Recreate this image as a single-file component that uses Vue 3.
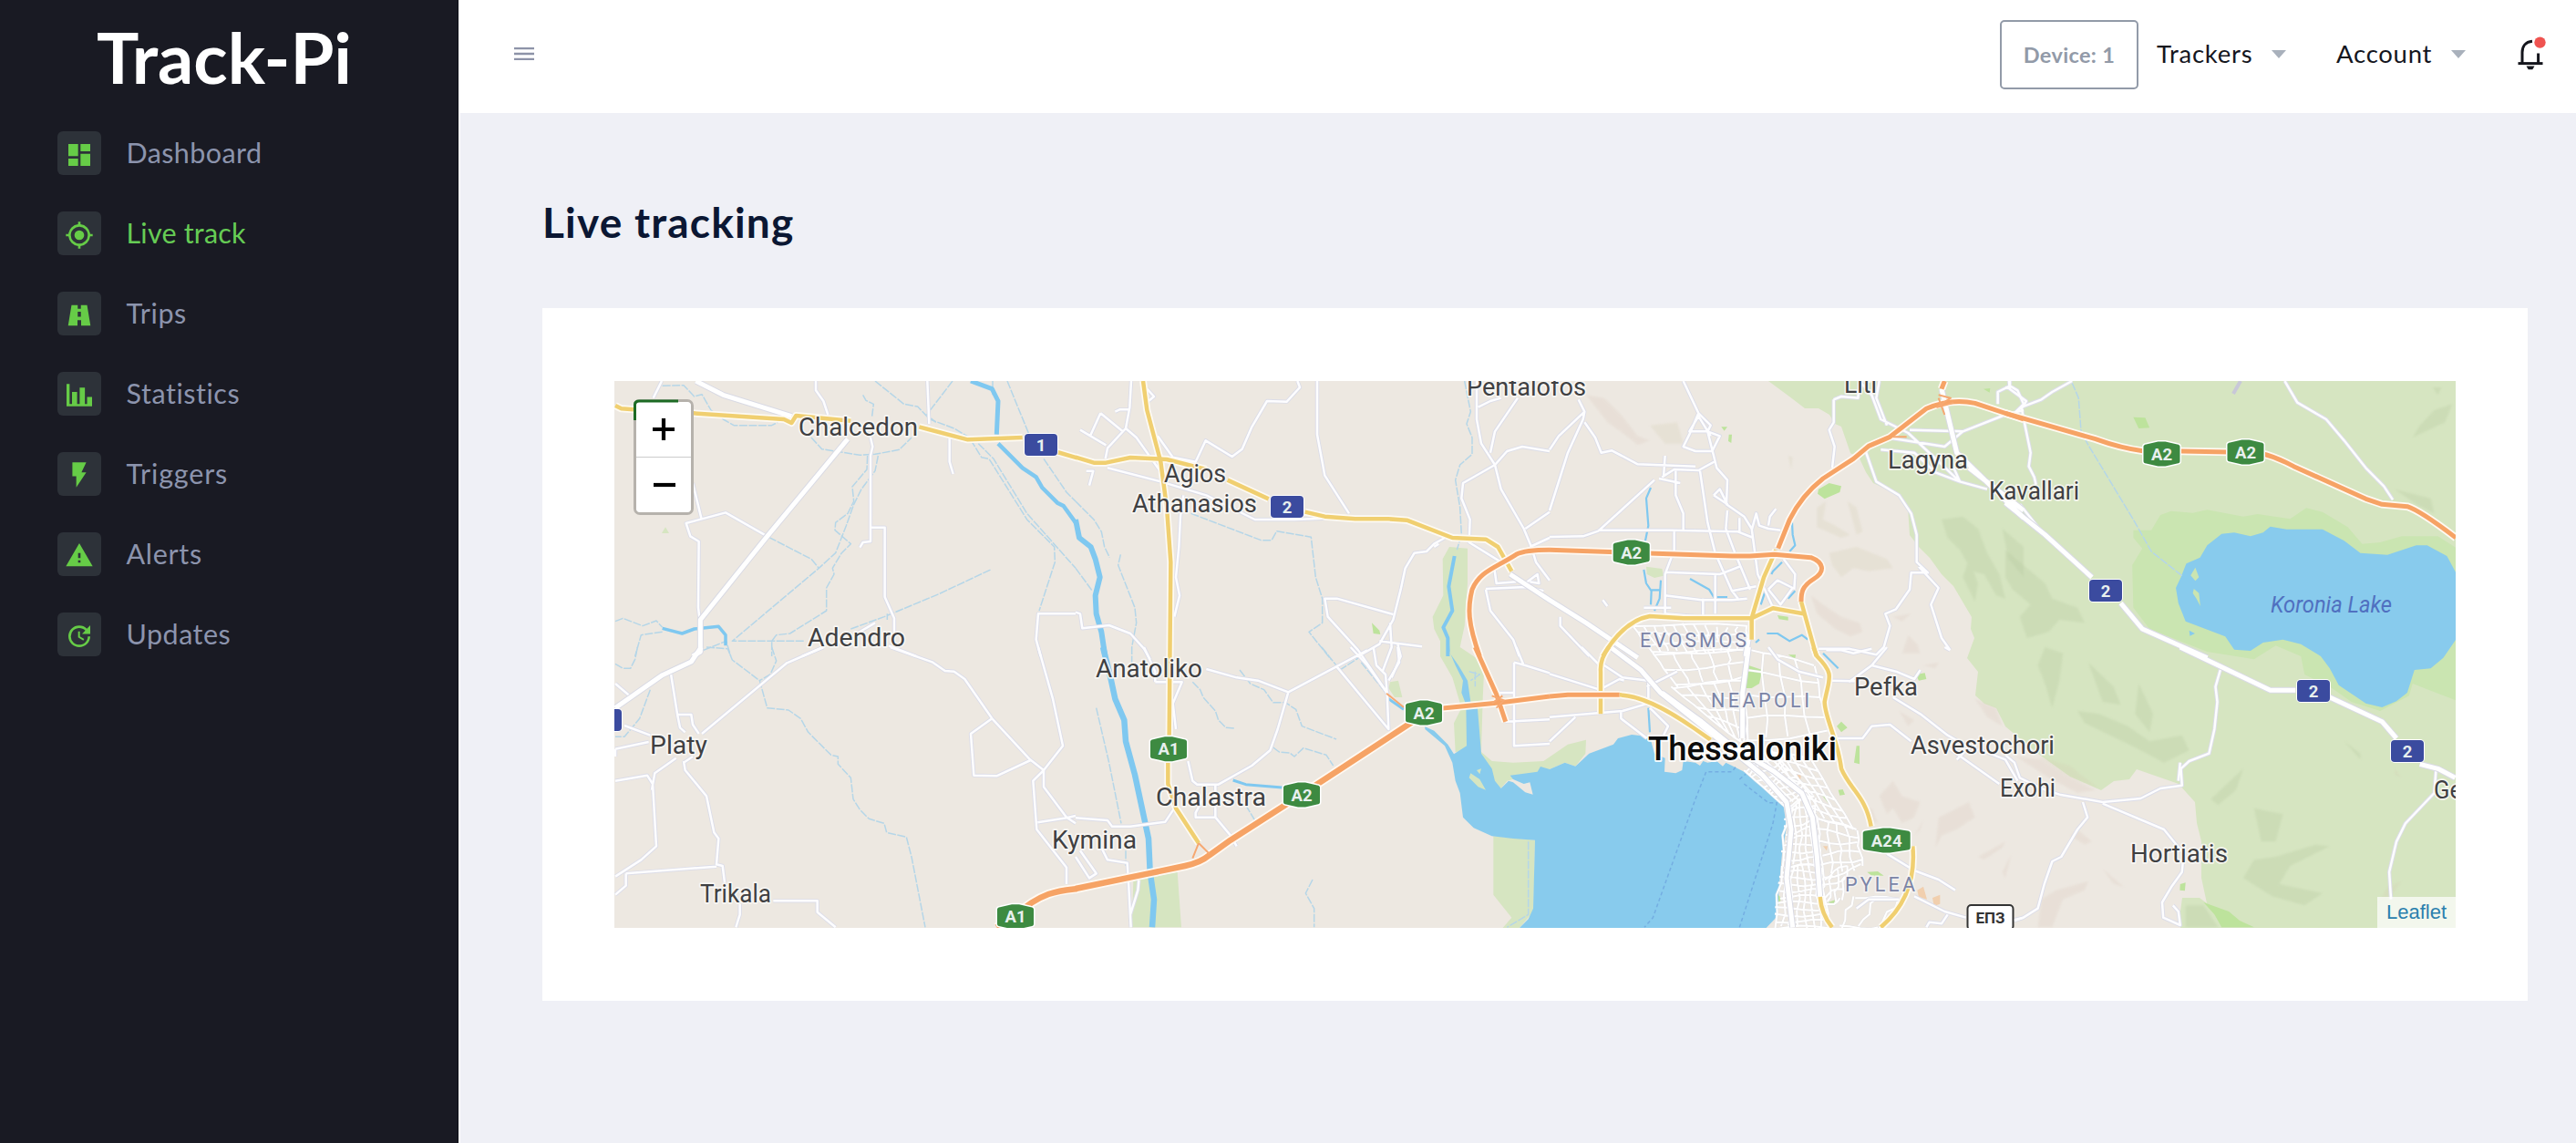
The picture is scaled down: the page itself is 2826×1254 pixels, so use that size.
<script setup>
const menu = [
  { label: 'Dashboard', icon: 'M3 13h8V3H3v10zm0 8h8v-6H3v6zm10 0h8V11h-8v10zm0-18v6h8V3h-8z', gap: 0.4 },
  { label: 'Live track', icon: 'M12 8a4 4 0 1 0 0 8 4 4 0 0 0 0-8zm8.94 3A8.99 8.99 0 0 0 13 3.06V1h-2v2.06A8.99 8.99 0 0 0 3.06 11H1v2h2.06A8.99 8.99 0 0 0 11 20.94V23h2v-2.06A8.99 8.99 0 0 0 20.94 13H23v-2h-2.06zM12 19a7 7 0 1 1 0-14 7 7 0 0 1 0 14z', active: true, gap: 0.2 },
  { label: 'Trips', icon: 'M5.6 3.5H10.7V6.5H13.3V3.5H18.4L21.2 20.5H13.5V16H10.5V20.5H2.8zM10.7 9V13.2H13.3V9z', gap: 0.6 },
  { label: 'Statistics', icon: 'M1.5 2.5H4V19H6V9H10.2V19H12.3V5.5H16.6V19H18.4V13.2H22.5V20.8H1.5z', gap: 0.55 },
  { label: 'Triggers', icon: 'M6.3 1v11.4h3.2V21.5L17.7 9.2h-3.9L17.7 1z', gap: 0.85 },
  { label: 'Alerts', icon: 'M1 20.5h22L12 1.5 1 20.5zM13 17.5h-2v-2h2v2zm0-3.8h-2V9.5h2v4.2z', gap: 0.7 },
  { label: 'Updates', icon: 'M21 10.12h-6.78l2.74-2.82c-2.73-2.7-7.15-2.8-9.88-.1a6.887 6.887 0 0 0 0 9.8c2.73 2.7 7.15 2.7 9.88 0 1.36-1.35 2.04-2.92 2.04-4.9h2c0 1.98-.88 4.55-2.64 6.29-3.51 3.48-9.21 3.48-12.72 0-3.5-3.47-3.53-9.11-.02-12.58a8.987 8.987 0 0 1 12.65 0L21 3v7.12zM12.5 8v4.25l3.5 2.08-.72 1.21L11 13V8h1.5z', gap: 0.5 },
]

// map sheets: origin and scale of each survey square
const sx = 0.3954
const sheets = {
  A: `translate(660 400) scale(${1 / 3})`,
  B: `translate(1180 400) scale(${1 / 3})`,
  C: `translate(1700 400) scale(${1 / 3})`,
  D: `translate(2200 400) scale(${sx} ${1 / 3})`,
  E: `translate(660 710) scale(${1 / 3})`,
  F: `translate(1180 710) scale(${1 / 3})`,
  G: `translate(1700 710) scale(${1 / 3})`,
  H: `translate(2200 710) scale(${sx} ${1 / 3})`,
}

const areas = [
  ['D', 'wet', 'M355 545L405 545L430 495L460 482L520 488L560 478L660 500L700 492L790 508L835 472L880 485L950 535L990 590L1040 585L1100 565L1200 565L1260 610V1110L1130 1050L1120 1090L1040 1140L960 1110L900 1060L830 1020L820 960L750 925L690 970L560 945L400 870L355 800L352 660L380 605L355 570Z'],
  ['D', 'water', 'M735 533L780 542L880 542L940 580L985 620L1060 626L1140 595L1170 595L1225 630L1250 685L1250 905L1215 965L1180 1000L1135 1005L1115 1080L1085 1108L1045 1128L1000 1115L925 1055L900 1000L875 960L820 920L770 905L715 915L680 942L635 938L610 895L500 845L480 785L473 735L487 700L502 655L540 635L560 595L600 557L635 553L680 565L715 553Z'],
  ['D', 'wet', 'M527 668L537 700L527 712L514 694ZM523 738L537 752L541 795L530 770L520 752Z'],
  ['D', 'water', 'M510 875L526 885L512 893Z'],
  ['F', 'green', 'M1230 -330L1290 -325L1290 -210L1280 -70L1265 0L1310 30L1345 60L1340 170L1335 345L1370 375L1440 380L1540 375L1620 320L1680 305L1678 350L1645 392L1610 380L1560 402L1420 440L1395 470L1300 340L1250 345L1245 250L1270 200L1240 100L1200 30L1200 -20L1180 -60L1175 -100L1210 -170L1208 -290Z'],
  ['F', 'green', 'M1035 115L1062 110L1075 165L1050 165L1030 135ZM190 770L335 740L348 922H185Z'],
  ['F', 'green', 'M1375 622L1512 635L1507 870L1460 925H1405L1435 890L1375 815Z'],
  ['F', 'water', 'M1220 -10L1250 60L1275 110L1270 150L1285 190L1287 325L1245 352L1225 320L1180 275L1150 262L1150 270L1215 325L1240 380L1250 440L1265 480L1275 560L1310 595L1370 622L1440 630L1512 635L1506 860L1490 895L1460 925H2272L2310 885L2315 790L2325 680L2340 590L2330 525L2260 460L2200 410L2160 390L2140 380L2130 392L2110 375L2080 380L2065 375L2055 390L2040 380L2000 375L1996 405L1975 415L1938 410L1940 365L1905 350L1890 295L1830 288L1785 300L1770 320L1690 350L1645 392L1610 380L1560 402L1530 393L1520 410L1430 422L1440 435L1475 450L1495 445L1505 485L1480 478L1440 445L1425 440L1400 465L1380 440L1370 400L1335 350L1322 190L1300 180L1290 110L1260 60L1232 20L1230 -10Z'],
  ['F', 'green', 'M1300 415L1330 435L1350 470L1325 460L1295 430ZM1320 405L1335 400L1330 418Z'],
  ['G', 'park', 'M655 60L700 75L690 120L665 135L640 135ZM945 260L960 245L980 265L960 280ZM1010 325L1020 325L1020 385L1002 380ZM1205 90L1235 85L1240 105L1215 110ZM950 470L965 468L972 485L955 488ZM895 485L910 490L918 515ZM1045 740L1080 738L1100 752L1060 752ZM785 25L810 25L808 38ZM915 840L940 832L935 845ZM230 110L245 102L240 115ZM752 815L762 825L755 850Z'],
  ['C', 'park', 'M885 410L920 390L960 400L955 420L905 442L882 425ZM750 825L785 830L785 842L755 838ZM590 230L600 230L598 258L588 252ZM1428 80L1450 78L1448 92ZM565 205L585 205L575 218Z'],
  ['C', 'green', 'M318 665L370 672L375 695L345 702L320 690Z'],
  ['B', 'park', 'M975 850L1000 875L1003 888L980 885Z'],
  ['A', 'green', 'M198 555L210 535L222 555Z'],
  ['D', 'park', 'M355 173L388 175L400 208L370 210Z'],
  ['H', 'park', 'M550 840L620 870L650 900L690 922H600L580 880ZM485 780L500 775L498 802L484 800Z'],
  ['G', 'sand', 'M1210 800L1230 788L1242 830L1215 822ZM1260 825L1285 815L1285 845L1265 852ZM812 422L828 418L825 438ZM900 655L915 655L912 670Z'],
]

// relief shading
const relief = [
  ['C', 'brown', 'M120 100L180 110L240 170L290 235L330 250L290 265L240 225L190 190ZM860 760L900 790L960 830L1020 850L1030 880L990 895L940 870L880 820ZM1130 830L1190 820L1160 845ZM1180 890L1210 920L1220 950L1160 950Z'],
  ['C', 'olive', 'M880 470L910 450L900 510L940 530L990 560L960 570L880 535ZM920 620L1010 600L1110 640L1130 670L1050 680L1000 670L960 700L930 660ZM980 450L1010 560L1030 550L1010 470ZM785 300L800 305L795 345ZM330 200L420 190L440 260L380 260Z'],
  ['C', 'dark', 'M1290 510L1360 500L1410 540L1440 620L1480 690L1500 770L1470 760L1430 690L1390 680L1350 610L1310 570ZM1380 640L1410 720L1400 780L1360 700ZM1490 540L1560 600V700L1510 640Z'],
  ['D', 'dark', 'M0 610L50 660L110 720L130 770L200 800L220 850L150 840L120 880L60 900L40 830L70 790L20 740L0 700ZM1190 150L1240 130L1220 190L1130 240L1150 200ZM1080 410L1180 440L1190 490L1140 460ZM1185 75L1210 75L1200 100Z'],
  ['H', 'dark', 'M110 0L160 20L150 110L130 200L110 120L90 60ZM230 50L300 130L320 190L270 180ZM370 120L410 220L400 280L360 220ZM200 210L260 220L340 260L400 310L490 290L510 340L440 380L360 330L220 250ZM660 400L640 470L590 520L570 500ZM690 530L770 550L750 640L710 640ZM690 700L750 690L860 650L900 655L790 720L760 780L880 810L830 850L740 820L660 760ZM940 310L985 350L985 370ZM500 850L550 850L590 922H500Z'],
  ['H', 'olive', 'M90 360L180 390L210 420L260 465L180 430ZM1080 400L1100 430L1080 420ZM1100 770L1070 820L1030 850L1060 790Z'],
  ['H', 'brown', 'M30 360L100 370L180 430L250 470L200 480L120 430ZM100 830L140 800L230 770L220 800L160 830L130 922H90ZM200 600L240 640L220 650L180 620ZM270 730L330 790L300 780Z'],
  ['G', 'brown', 'M1085 490L1130 440L1160 490L1220 510L1200 560L1160 580L1130 530L1110 550ZM1280 560L1340 530L1380 510L1400 560L1340 600L1290 620L1270 660ZM1220 600L1230 570L1200 620ZM1410 690L1500 640L1490 660L1430 700ZM1030 540L1060 530L1080 580L1050 570ZM1150 210L1200 240L1180 260ZM1400 170L1470 200L1490 260L1440 230ZM1230 60L1280 50L1270 70ZM1490 740L1520 680L1500 760Z'],
]

const streams = [
  ['A', 'M200 70L270 68L305 105L330 98L360 150L400 180L435 200H560L580 190'],
  ['A', 'M900 54L995 130L1040 138L1080 180L1160 210L1210 240L1250 305L1275 310L1400 510L1490 600L1492 650L1440 810'],
  ['A', 'M1240 260L1290 310L1400 490L1560 670M1155 54L1070 165L1100 190M1335 54L1370 140L1405 225M1287 54V100M1455 310L1530 420L1560 450'],
  ['A', 'M860 100L870 118L895 130L890 170M690 240L725 278L850 298L900 295L980 280L1020 240M875 300L873 345L825 402L830 450L810 490L770 520L768 545L820 590L790 620L760 670L765 690L740 735V810L620 885L575 890L560 910V960'],
  ['A', 'M910 300L900 350L855 410L830 460L805 530L770 620L715 670L430 910H670M550 568L690 640L715 670M820 870L930 830L1110 755L1280 675M940 820V840'],
  ['A', 'M45 845L70 835L135 860L180 843L200 865M200 880L130 890L110 960M335 940L410 910L425 960'],
  ['E', 'M45 55L70 70H95L110 40L118 0M345 0L415 5L430 42L520 110L545 200L615 207L655 235L680 280L755 355L778 360V385L820 430L828 500L850 535L880 565L930 580L938 610L1003 625L1020 690L1065 922M560 0L575 45L555 90L520 110M160 140L125 235L75 295H45'],
  ['B', 'M0 450L60 510L85 550L95 600L112 635M0 670L55 745M148 625L140 660L195 800L200 850L185 930V990M380 490L610 578H645L662 548L775 568L790 700L812 770V850L768 880L840 970'],
  ['B', 'M1280 54L1300 155L1287 195L1305 240V295L1265 330L1250 380L1265 470L1270 560L1255 610M1315 1010V1060'],
  ['F', 'M68 200L110 380L150 580M385 115L410 140L420 165L460 210L470 240L495 265L523 267M540 75L575 120L620 140L650 182H690L725 205L745 260L858 303M650 330L670 345L705 348L720 360L750 332L825 355L848 390M780 765L757 810L785 860V922M560 520L590 570M165 670V720M810 0L870 75L940 30M940 50L1020 150M1295 80L1330 90L1300 110M1490 640V880L1420 922'],
  ['D', 'M185 60L203 110L210 220L230 265L355 510L405 615L490 695'],
]

const rivers = [
  ['A', 'M1215 54L1285 80L1305 120L1300 230', 5],
  ['A', 'M1305 260L1385 340L1430 370L1450 405L1500 455L1520 465L1560 520', 4.5],
  ['B', 'M0 510L12 570L50 600L65 640L80 700L65 760L68 820L85 880L97 960', 6],
  ['F', 'M90 0L115 100L130 170L160 240L165 310L195 420L225 560L240 630L245 740L258 830L252 922', 6.5],
  ['A', 'M200 868L265 885L305 870L385 862L408 890V925', 3.5],
  ['B', 'M1247 630L1228 730L1240 810L1210 865L1225 900V960', 4],
  ['C', 'M333 405L318 440L325 530L315 580M310 675L318 720L335 745L333 790M366 710L362 770L345 810M335 742H362M462 705L525 740L540 765H585M798 520L800 560L808 595L790 615M765 650L735 680L730 690M710 745L695 790M808 745L785 770M715 885H750L790 910L830 890L850 905M690 905L678 915', 2.2],
  ['F', 'M518 438L560 452L680 462M1030 170L1080 205', 3],
  ['G', 'M325 200L330 280M900 20L950 70', 2.2],
]

const minor = [
  ['A', 'M198 54L170 110M705 54V85L730 120L745 165M1072 54L1078 195M1145 240V320L1157 360M885 240L892 270L885 300V582L860 585L850 602M888 536H932V765L963 835V880M300 390L328 505M545 565L408 487L278 522L292 565L320 582L318 800L323 840M1560 820H1437L1430 905L1445 960M660 960L730 930M945 925L1035 960M840 885L900 850'],
  ['E', 'M45 120L98 165M228 88L250 225M252 222H295L300 255L320 285M250 225L258 265L275 280M45 335L155 312M75 258L160 290M45 440L150 422L168 450L180 655L130 700L45 755M245 365L175 415L165 470M270 375L275 405L345 490L370 610L385 630L378 715L398 720L405 775M80 745L378 722M80 745V785L45 815M565 835H710V872L770 922M455 845V880L442 922M330 285L610 52L730 0M950 0L1090 50L1130 78L1160 80L1195 105L1285 235L1410 370L1455 405M1285 235L1215 285L1225 422L1300 424L1412 372M1437 0L1485 170L1518 325L1455 405V460L1530 560L1560 580M1455 405L1420 440L1432 600L1530 725V780M1435 577L1530 562L1560 555M45 335V360M300 360L270 380'],
  ['B', 'M183 54L178 140L165 210L105 275L98 310M130 155L145 148H178M15 215L100 265M82 160L155 220M82 160L48 235M165 210L200 240L285 360M270 235L320 305L395 320L428 250L515 303L548 278L580 205L630 120L695 122L738 75L730 54M235 80L258 105L240 120M795 54V230L820 365L900 490M105 340L280 385L430 430L590 510H720L850 505M35 350H58L45 398M355 430L345 500L340 600L330 700L342 760L325 830M1320 54V180L1335 260L1380 330L1400 410L1475 540L1500 600L1515 650L1560 710M1455 110L1380 220L1365 290M1325 140L1365 120L1400 110M1560 285L1470 270L1420 285L1380 330L1275 390L1270 440L1298 510L1295 585L1400 650M1480 540L1560 485M1495 600L1560 570M1215 570L1180 590L1155 615L1115 620L1085 670L1070 740L1045 840L1000 920L930 960M1195 590L1180 600M1045 822L860 770H820L830 830L930 940L1025 1080M1035 850L1040 930L1010 1010M1000 910L1140 928M1060 920L1070 960L1040 1030M0 815L15 820L22 868L110 858L180 885L225 935L245 970M1350 738L1480 732L1540 745M1350 740L1365 810L1440 905L1460 960M1378 670L1385 720L1450 715M1480 720L1520 690L1525 720L1495 715'],
  ['F', 'M430 72L530 100L600 110L700 148L960 10M700 148L665 270L640 340L580 390L470 452H400L385 440L370 375M262 115H350L320 185L330 270M905 0L960 60L1025 150L1030 270L860 65M980 0L990 60L1020 90L1025 150M1060 0L1065 50L1030 110M460 450V560H395L395 545L430 480M460 560L510 620L530 655M325 530L295 575L180 590H120L105 570L0 562M0 690L45 760L68 745L15 670M85 660L105 700L170 710L175 790L182 922M208 768L205 800L180 880M1390 150H1443M1443 50V325L1560 318M1443 50L1480 60L1560 85M1415 245L1560 238M1450 0L1475 60M225 0L262 80V115'],
  ['C', 'M95 115L115 155L110 180L60 290L0 480M115 155L30 235L0 280M115 190L150 240L170 290L205 283L290 328L480 335M440 54L490 160L530 200L520 220L550 340L585 380L582 460L640 500L665 540L685 690L740 810M490 160L460 230L440 270L480 285H535L560 235L520 220H460L490 170L530 235M345 380L160 548L110 565L0 567M370 370L410 345L490 348L545 318M380 300L375 370M415 350V430L440 490V548M160 545H400L620 550L670 570M495 350L520 520L545 620L600 745L620 770M585 480L580 540L610 620L660 740M410 550V610L380 690V820L500 830M380 683L560 690H545V820M560 690L600 675L625 665M505 770V830M380 760L500 775H600L650 770M540 430L560 410L585 460L540 430M625 505V550M665 545L680 490L690 530L720 540L760 545M720 530L725 500L745 475M430 390L360 375M600 745L680 730M720 740L750 710L800 735L760 790L720 740M770 640L808 690L805 740M310 800H400M175 775L190 795M1085 54L1075 110L1110 200M1020 54L1060 100L1090 180L1180 225L1350 385L1440 410M935 115L960 105L1015 110L1020 60M935 115V190L920 215L938 270L930 340M1040 285L1075 385L1150 430L1190 490L1208 560V650L1245 685L1190 685L1185 740L1140 805L1105 820L1120 860L1100 930L1075 955L985 935L885 935M1215 665L1280 735L1255 790L1290 900L1318 940M1185 215L1360 220L1500 165L1560 150M1110 240L1300 270L1360 220M1090 280L1200 290L1270 355L1350 385L1330 340M1475 130V90L1515 70L1540 85L1560 130L1530 160M1515 54V75M35 830V860L130 960'],
  ['G', 'M0 88L165 140L230 105L245 110M0 230L240 210L325 185M85 230L0 310M235 210V235L320 300M105 0L165 60M165 50L240 100L325 110V180M925 110L1005 112M945 300H1030L1060 260L1120 255L1190 310M1130 165L1220 220L1310 290L1380 330L1410 340M1310 330L1480 450M1060 60L1110 0M985 115L1060 60L1140 80L1200 105L1220 75M1380 330L1340 370M1410 335L1500 370L1540 440M1110 680L1200 735L1280 765L1335 800M1150 830H1050L1010 860M1200 820L1300 870L1370 890M1240 922L1250 905L1290 910L1310 880M1530 900L1560 890M720 0L750 40L820 80L900 100M910 10L960 10L1000 20L1060 5M1300 0L1318 10M365 310L390 260L330 200M320 130L420 80'],
  ['D', 'M10 54L12 80L58 120L45 145L70 290L65 335L80 370L85 395M0 75L15 80M185 54L130 90L100 115L45 140L25 160M775 54L810 125L890 180L940 250L1000 340L1050 400L1075 445M40 460L100 550'],
  ['H', 'M600 60L583 130L588 180L580 270L565 350L510 375L487 400L490 455L430 465L375 498L270 510L150 485M485 380L480 440M215 510L228 560L200 600L155 690L130 705L108 780L90 860L50 890L0 905M270 515L440 600L495 680L490 740L460 790L435 840L438 890L485 915L480 870L465 850M1195 400L1190 480L1110 580L1085 640L1065 740L1070 830M0 355L25 380L40 430L100 465L150 485'],
]

const major = [
  ['A', 'M310 54L400 100L625 170M810 245L545 565L325 840V945L300 960'],
  ['E', 'M328 0L295 48L200 92L45 200'],
  ['B', 'M1430 690L1560 775L1680 850L1850 965'],
  ['C', 'M1290 80L1340 290L1560 505M1380 340L1560 480M655 900L645 960'],
  ['D', 'M0 455L110 560L240 700M320 785L380 870L560 965'],
  ['H', 'M485 0L735 142H805M900 165L1045 245L1085 300M1150 385L1200 400L1248 430'],
  ['G', 'M200 0L300 75L365 150L500 245L600 325L740 410L830 480L865 560L880 690L890 820M655 0L635 150V300M370 150L500 245'],
  ['G', 'M365 150L540 290L700 420L780 510L795 600L780 760L800 922'],
]

const yellow = [
  ['A', 'M45 135L65 145L105 148M300 160L600 180L625 192L640 168L820 185M1045 205L1205 247L1385 240M1500 288L1565 307'],
  ['B', 'M0 305L60 323H100L180 306L300 312L430 345M500 380L635 442M755 485L820 500L920 508H1030L1090 512L1240 570L1350 575L1390 600L1435 680'],
  ['B', 'M222 54L235 150L280 320L300 470L313 650L308 1220'],
  ['F', 'M304 380V450L330 530L405 645'],
  ['C', 'M745 610L705 700L665 835V905M665 835H440L330 828C260 840 210 900 175 960M665 835L735 802L835 820M828 780L878 960'],
  ['G', 'M195 0Q165 40 168 80V220M230 157C330 160 450 250 480 270L530 305M868 0L880 30C940 90 920 100 905 180C905 230 950 310 960 400C990 470 1040 490 1058 590M1195 655Q1210 820 1090 922M890 822Q895 880 930 922'],
]

const orange = [
  ['B', 'M1330 960C1290 850 1290 800 1305 740C1330 680 1380 670 1450 625Q1480 610 1560 610'],
  ['C', 'M0 610L350 622L600 630H660L740 625L860 635C900 650 910 680 870 705C830 730 828 750 828 780'],
  ['C', 'M752 605L790 510Q830 430 900 375L1000 310L1050 268L1120 238L1240 145Q1320 110 1400 127L1560 180M1300 54L1290 80'],
  ['D', 'M0 160L250 245Q320 275 385 285H490L620 288Q700 270 800 335L1000 442L1045 460L1115 467Q1150 480 1250 570'],
  ['F', 'M1315 0L1385 155L1415 245M1200 202L1400 182L1560 162'],
  ['G', 'M0 162L60 157H230'],
]
const motorway = [
  ['E', 'M1300 922L1360 885C1450 800 1520 800 1565 795'],
  ['F', 'M0 795L240 745L360 720Q410 710 440 685L510 635L690 520L1140 225'],
]
const ramps = [
  ['F', 'M405 645L385 695M405 645L440 680M1370 160L1410 175L1385 200M1370 185L1405 160M1023 152L1080 198'],
  ['C', 'M1280 100L1320 110L1275 140L1330 125M1280 110L1300 165M1130 238H1175'],
]
const ferries = [
  ['G', 'M612 395L600 410H515L480 500L340 890L312 922M640 450L720 512H748L735 580L625 922M625 435L645 418'],
]

// city street grid between four corners, with a small deterministic wobble
const grid = ([a, b, c, d], nu, nv) => {
  const at = (u, v, k) => {
    const w = Math.sin(k * 12.9898 + u * 5 + v * 9) * 6
    const x = (a[0] * (1 - u) + b[0] * u) * (1 - v) + (d[0] * (1 - u) + c[0] * u) * v
    const y = (a[1] * (1 - u) + b[1] * u) * (1 - v) + (d[1] * (1 - u) + c[1] * u) * v
    return `${(x + w).toFixed(1)} ${(y + w).toFixed(1)}`
  }
  let p = ''
  const steps = [0, 0.25, 0.5, 0.75, 1]
  for (let i = 0; i <= nu; i++) p += 'M' + steps.map((s) => at(i / nu, s, i)).join('L')
  for (let j = 0; j <= nv; j++) p += 'M' + steps.map((s) => at(s, j / nv, j + 3)).join('L')
  return p
}
const streets = [
  grid([[640, 405], [730, 340], [870, 490], [775, 525]], 6, 9),
  grid([[780, 530], [870, 490], [890, 720], [765, 720]], 6, 9),
  grid([[765, 720], [890, 720], [920, 922], [740, 922]], 7, 10),
  grid([[730, 340], [860, 370], [1000, 600], [880, 560]], 4, 7),
  grid([[880, 560], [1010, 600], [1030, 720], [900, 760]], 4, 5),
  grid([[900, 760], [980, 720], [960, 830], [900, 850]], 3, 3),
  grid([[270, -75], [650, -70], [650, 10], [340, 20]], 11, 3),
  grid([[340, 20], [650, 10], [640, 100], [420, 130]], 5, 2),
  grid([[400, 130], [640, 110], [640, 320], [560, 260]], 5, 4),
  grid([[640, 0], [870, 60], [920, 280], [650, 310]], 4, 4),
  grid([[1000, 820], [1150, 830], [1080, 922], [960, 922]], 2, 1),
]

const lay = [
  { name: 'minor', items: minor },
  { name: 'major', items: major },
  { name: 'yellow', items: yellow },
  { name: 'orange', items: orange },
  { name: 'motorway', items: motorway },
]

const places = [
  ['Pentalofos', 1609, 433.5, 131], ['Chalcedon', 876, 478, 131], ['Agios', 1277, 528.5, 68], ['Athanasios', 1242, 561.5, 137],
  ['Adendro', 886, 709, 107], ['Liti', 2023, 431, 36], ['Lagyna', 2071, 514, 88], ['Kavallari', 2182, 547.5, 99],
  ['Anatoliko', 1202, 742.5, 117], ['Platy', 713, 827, 63], ['Chalastra', 1268, 884, 121], ['Kymina', 1154, 930.5, 93],
  ['Trikala', 768, 990, 78], ['Pefka', 2034, 763, 70], ['Asvestochori', 2096, 827, 158], ['Exohi', 2194, 873.5, 61],
  ['Hortiatis', 2337, 946, 107], ['Ge', 2670, 876, 31],
]
const districts = [['EVOSMOS', 1799, 710, 117], ['NEAPOLI', 1877, 775.5, 108], ['PYLEA', 2024, 977.5, 77]]
const blue = [['1', 1142, 488], ['2', 1412, 556], ['2', 2310, 648], ['2', 2538, 758], ['2', 2641, 824], ['', 664, 790]]
const green = [
  ['A2', 1789.7, 606, 20], ['A2', 2371.5, 498, 20], ['A2', 2463.5, 496, 20], ['A1', 1282, 821.7, 20],
  ['A2', 1428, 872, 20], ['A2', 1562, 782, 20], ['A1', 1114, 1005.7, 20], ['A24', 2069.7, 922, 26],
]
const hex = (x, y, h) => `M${x - h} ${y - 8}Q${x - h} ${y - 10} ${x - h + 3} ${y - 10.5}L${x - 4} ${y - 13.5}H${x + 4}L${x + h - 3} ${y - 10.5}Q${x + h} ${y - 10} ${x + h} ${y - 8}V${y + 8}Q${x + h} ${y + 10} ${x + h - 3} ${y + 10.5}L${x + 4} ${y + 13.5}H${x - 4}L${x - h + 3} ${y + 10.5}Q${x - h} ${y + 10} ${x - h} ${y + 8}Z`
</script>

<template>
  <div class="app">
    <aside class="sidebar">
      <svg class="logo" viewBox="0 0 290 72" width="290" height="72">
        <text x="5" y="61" textLength="280" lengthAdjust="spacingAndGlyphs">Track-Pi</text>
      </svg>
      <nav class="menu">
        <a v-for="m in menu" :key="m.label" class="item" :class="{ active: m.active }">
          <span class="tile"><svg viewBox="0 0 24 24" width="32" height="32"><path :d="m.icon" fill-rule="evenodd" /></svg></span>
          <span class="label" :style="{ letterSpacing: m.gap + 'px' }">{{ m.label }}</span>
        </a>
      </nav>
    </aside>

    <div class="page">
      <header class="topbar">
        <svg class="burger" viewBox="0 0 22 14" width="22" height="14"><path d="M0 1.2H22M0 7H22M0 12.8H22" /></svg>
        <div class="tools">
          <button class="device">Device: 1</button>
          <span class="drop">Trackers<i class="caret"></i></span>
          <span class="drop">Account<i class="caret"></i></span>
          <svg class="bell" viewBox="0 0 34 40" width="34" height="40">
            <path class="body" d="M18 5.2C10.5 5.8 7 11 7 17.5V29M24.6 18.5V29" />
            <path class="base" d="M2.5 29.6H29.5" />
            <path class="clap" d="M11.5 32.5H20.5L18.3 36.3H13.7Z" />
            <circle cx="26.5" cy="6.6" r="6.2" />
          </svg>
        </div>
      </header>

      <main class="content">
        <h1>Live tracking</h1>
        <section class="card">
          <div class="map">
            <svg class="canvas" viewBox="674 418 2020 600" width="2020" height="600">
              <path class="green" d="M1940 418L1963 435 1980 448 1995 448 2007 455 2013 465 2020 468 2030 497 2040 503 2047 518 2055 530 2083 543 2093 557 2095 587 2105 600 2117 612 2130 630 2143 643 2163 677 2162 690 2166 700 2158 722 2170 737 2167 763 2177 772 2190 777 2200 797 2236 827 2271 852 2305 867 2319 857 2336 855 2344 844 2390 860 2408 880 2410 903 2415 923 2415 963 2421 991 2413 985 2394 985 2392 1000 2392 1018 2694 1018 2694 418Z" />
              <path v-for="(a, i) in relief" :key="'t' + i" :class="['relief', a[1]]" :transform="sheets[a[0]]" :d="a[2]" />
              <path v-for="(a, i) in areas" :key="'a' + i" :class="a[1]" :transform="sheets[a[0]]" :d="a[2]" />
              <path v-for="(s, i) in streams" :key="'s' + i" class="line stream" :transform="sheets[s[0]]" :d="s[1]" />
              <path v-for="(s, i) in rivers" :key="'r' + i" class="line river" :stroke-width="s[2]" :transform="sheets[s[0]]" :d="s[1]" />
              <path v-for="(s, i) in ferries" :key="'f' + i" class="line ferry" :transform="sheets[s[0]]" :d="s[1]" />
              <path v-for="(s, i) in streets" :key="'c' + i" class="line street-case" :transform="sheets.G" :d="s" />
              <path v-for="(s, i) in streets" :key="'g' + i" class="line street" :transform="sheets.G" :d="s" />
              <template v-for="l in lay" :key="l.name">
                <path v-for="(s, i) in l.items" :key="'k' + i" :class="['line', l.name + '-case']" :transform="sheets[s[0]]" :d="s[1]" />
                <path v-for="(s, i) in l.items" :key="'l' + i" :class="['line', l.name]" :transform="sheets[s[0]]" :d="s[1]" />
              </template>
              <path v-for="(s, i) in ramps" :key="'p' + i" class="line ramp" :transform="sheets[s[0]]" :d="s[1]" />
              <path class="runway" d="M2450 432L2458 418" />

              <g v-for="(b, i) in blue" :key="'b' + i">
                <rect class="blue" :x="b[1] - 18" :y="b[2] - 12" width="36" height="24" rx="4" />
                <text v-if="b[0]" class="ref" :x="b[1]" :y="b[2] + 6.5">{{ b[0] }}</text>
              </g>
              <g v-for="(g, i) in green" :key="'h' + i">
                <path class="hex" :d="hex(g[1], g[2], g[3])" />
                <text class="ref" :x="g[1]" :y="g[2] + 6.5">{{ g[0] }}</text>
              </g>
              <rect class="plate" x="2158.5" y="993" width="50" height="27" rx="4" />
              <text class="ref dark-ref" x="2183.5" y="1012.5">ЕПЗ</text>

              <text v-for="p in places" :key="p[0]" class="place" :x="p[1]" :y="p[2]" :textLength="p[3]" lengthAdjust="spacingAndGlyphs">{{ p[0] }}</text>
              <text v-for="p in districts" :key="p[0]" class="district" :x="p[1]" :y="p[2]" :textLength="p[3]">{{ p[0] }}</text>
              <text class="city" x="1808" y="834" textLength="207" lengthAdjust="spacingAndGlyphs">Thessaloniki</text>
              <text class="lake" x="2491" y="672" textLength="133" lengthAdjust="spacingAndGlyphs">Koronia Lake</text>
            </svg>
            <div class="zoom">
              <button><svg viewBox="0 0 26 26" width="26" height="26"><path d="M13 1V25M1 13H25" /></svg></button>
              <button><svg viewBox="0 0 26 26" width="26" height="26"><path d="M2 13H26" /></svg></button>
              <svg class="focus" viewBox="0 0 50 24" width="50" height="24"><path d="M1.5 23V6Q1.5 2 6 2H49" /></svg>
            </div>
            <a class="credit">Leaflet</a>
          </div>
        </section>
      </main>
    </div>
  </div>
</template>

<style>
body { margin: 0; background: #eff0f6; }
</style>

<style scoped>
.app { display: flex; width: 2826px; height: 1254px; overflow: hidden; background: #eff0f6; font-family: Lato, "Noto Sans", sans-serif; }
.sidebar { width: 503px; flex: none; background: #191a23; border-right: 1px solid #0d0e16; box-sizing: border-box; height: 1254px; }
.logo { display: block; margin: 31px 0 0 101px; overflow: visible; }
.logo text { font: 700 76px Lato, sans-serif; fill: #fff; }
.menu { display: flex; flex-direction: column; gap: 40px; margin-top: 41px; padding-left: 62.5px; }
.item { display: flex; align-items: center; height: 48px; color: #8c94ad; font-size: 30.5px; }
.tile { width: 48px; height: 48px; border-radius: 6px; background: #2d3239; display: flex; align-items: center; justify-content: center; }
.tile svg { fill: #66cc47; margin-top: 3px; }
.label { margin: -3px 0 0 28px; line-height: 48px; }
.active { color: #66cc55; }

.page { flex: 1; border-left: 2px solid #fff; }
.topbar { height: 124px; background: #fff; display: flex; align-items: flex-start; justify-content: space-between; }
.burger { margin: 52px 0 0 59px; }
.burger path { stroke: #8d93a8; stroke-width: 2.3; }
.tools { display: flex; align-items: flex-start; }
.device { width: 152px; height: 76px; margin: 22px 20px 0 0; padding: 0; box-sizing: border-box; border: 2px solid #929aa8; border-radius: 5px; background: #fff; color: #929aa8; font: 700 23.5px Lato, sans-serif; letter-spacing: 0.35px; }
.drop { display: flex; align-items: center; width: 197px; height: 76px; margin-top: 20px; font-size: 27.5px; letter-spacing: 0.75px; color: #15161e; }
.caret { border: 8px solid transparent; border-top: 9px solid #a9b1bc; border-bottom: 0; margin: 2px 0 0 21px; }
.bell { margin: 40px 32px 0 0; }
.bell .body, .bell .base { fill: none; stroke: #14151c; stroke-width: 3; }
.bell .clap { fill: #14151c; }
.bell circle { fill: #ef5350; }

.content { padding: 88px 0 0 90px; }
h1 { margin: 0; height: 64px; line-height: 64px; font-size: 46px; font-weight: 700; color: #0b1733; letter-spacing: 1.2px; }
.card { margin-top: 62px; width: 2178px; height: 760px; background: #fff; box-sizing: border-box; padding: 80px 79px; }
.map { position: relative; width: 2020px; height: 600px; overflow: hidden; background: #ede8e1; }
.canvas { display: block; font-family: Roboto, sans-serif; }
.green { fill: #d6e5c1; }
.wet { fill: #cae5b1; }
.park { fill: #bde39c; }
.water { fill: #88cbed; }
.sand { fill: #f1cfae; }
.relief { filter: blur(3px); }
.brown { fill: #dccbc0; opacity: 0.28; }
.olive { fill: #d3cdb2; opacity: 0.25; }
.dark { fill: #b9cba2; opacity: 0.33; }
.line { fill: none; vector-effect: non-scaling-stroke; stroke-linejoin: round; }
.stream { stroke: #b5d6e8; stroke-width: 1.5; stroke-dasharray: 9 1.5; }
.river { stroke: #7fc8f0; }
.ferry { stroke: #74aee2; stroke-width: 1.5; stroke-dasharray: 4 3; }
.street-case { stroke: #dbdce4; stroke-width: 3; opacity: 0.6; }
.street { stroke: #fff; stroke-width: 2; }
.minor-case { stroke: #dcdde8; stroke-width: 4.4; }
.minor { stroke: #fdfdff; stroke-width: 2.5; }
.major-case { stroke: #d9dae4; stroke-width: 7; }
.major { stroke: #fff; stroke-width: 5; }
.yellow-case { stroke: #fdfaf3; stroke-width: 8; }
.yellow { stroke: #f0cf70; stroke-width: 4.5; }
.orange-case { stroke: #fff9f2; stroke-width: 8.5; }
.orange { stroke: #f6a365; stroke-width: 5; }
.motorway-case { stroke: #fff9f2; stroke-width: 10; }
.motorway { stroke: #f6a365; stroke-width: 6.5; }
.ramp { stroke: #f6a871; stroke-width: 2; }
.runway { stroke: #c8c8d8; stroke-width: 4; }
.blue { fill: #3b4b9f; stroke: #fff; stroke-width: 2; paint-order: stroke; }
.hex { fill: #3d8a41; stroke: #fff; stroke-width: 3; paint-order: stroke; }
.ref { fill: #e8f0ee; font: 700 18.5px Roboto, sans-serif; text-anchor: middle; }
.plate { fill: #fff; stroke: #333; stroke-width: 2; }
.dark-ref { fill: #333; font-size: 17px; }
.place { font-size: 28.5px; fill: #3f4042; stroke: rgba(250, 249, 247, 0.85); stroke-width: 3.5; paint-order: stroke; stroke-linejoin: round; }
.district { font-size: 21.5px; fill: #7b84a6; stroke: rgba(245, 245, 247, 0.8); stroke-width: 3; paint-order: stroke; }
.city { font-size: 37.5px; font-weight: 500; fill: #0c0c0c; stroke: rgba(255, 255, 255, 0.9); stroke-width: 4; paint-order: stroke; stroke-linejoin: round; }
.lake { font-size: 25px; font-style: italic; fill: #5070c0; }
.zoom { position: absolute; left: 21px; top: 20px; width: 66px; height: 127px; box-sizing: border-box; border: 3px solid #b6b2ac; border-radius: 7px; background: #fff; }
.zoom button { display: flex; align-items: center; justify-content: center; width: 60px; height: 60px; padding: 0; border: 0; background: #fff; border-radius: 5px; }
.zoom button + button { border-top: 1px solid #ccc; border-radius: 0 0 5px 5px; height: 61px; }
.zoom button path { fill: none; stroke: #000; stroke-width: 4.2; }
.focus { position: absolute; left: -3px; top: -3px; }
.focus path { fill: none; stroke: #1d6b24; stroke-width: 3; }
.credit { position: absolute; right: 0; bottom: 0; width: 86px; height: 34px; text-align: center; background: rgba(255, 255, 255, 0.7); color: #2b80ae; font: 22px/33px "Liberation Sans", Arial, sans-serif; }
</style>
